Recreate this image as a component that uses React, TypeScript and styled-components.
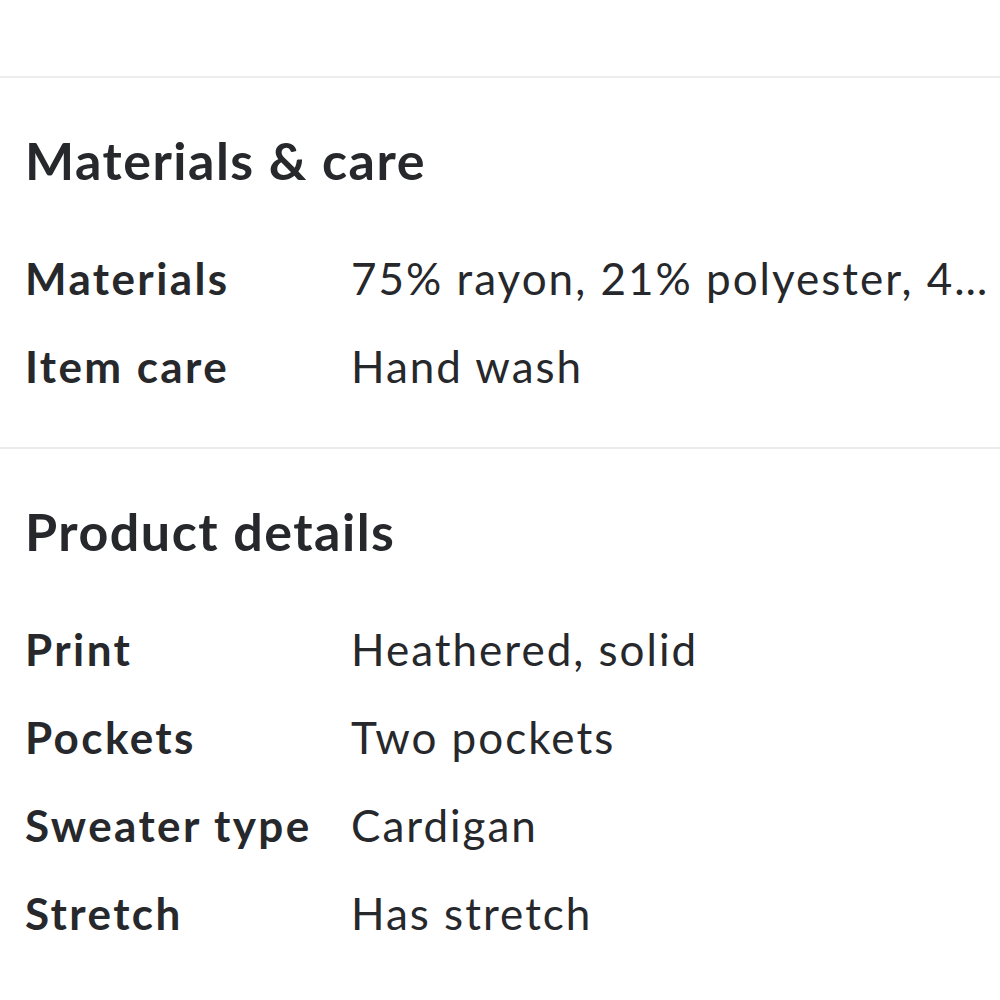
import React from "react";
import styled, { createGlobalStyle } from "styled-components";

const GlobalStyle = createGlobalStyle`
  html, body {
    margin: 0;
    padding: 0;
    background: #ffffff;
  }
  body {
    font-family: Lato, "Noto Sans", sans-serif;
    color: #26282c;
  }
`;

const Page = styled.div`
  padding-top: 76px;
  width: 1000px;
  overflow: hidden;
`;

const Section = styled.section`
  border-top: 2px solid #ececec;
  padding: 52px 10px 37px 25px;
`;

const Heading = styled.h2`
  margin: 0 0 44px;
  font-size: 52px;
  line-height: 60px;
  font-weight: 700;
  letter-spacing: 1.5px;
  color: #26282c;
`;

const Row = styled.div`
  display: grid;
  grid-template-columns: 326px 1fr;
  height: 88px;
  font-size: 44px;
  line-height: 88px;
`;

const Label = styled.div`
  font-weight: 700;
  letter-spacing: 2.4px;
  white-space: nowrap;
`;

const Value = styled.div`
  font-weight: 400;
  letter-spacing: 2px;
  white-space: nowrap;
  overflow: hidden;
  text-overflow: ellipsis;
`;

interface Detail {
  label: string;
  value: string;
}

const sections: { title: string; rows: Detail[] }[] = [
  {
    title: "Materials & care",
    rows: [
      { label: "Materials", value: "75% rayon, 21% polyester, 4% spandex" },
      { label: "Item care", value: "Hand wash" },
    ],
  },
  {
    title: "Product details",
    rows: [
      { label: "Print", value: "Heathered, solid" },
      { label: "Pockets", value: "Two pockets" },
      { label: "Sweater type", value: "Cardigan" },
      { label: "Stretch", value: "Has stretch" },
    ],
  },
];

const App: React.FC = () => {
  return (
    <>
      <GlobalStyle />
      <Page>
        {sections.map((s) => (
          <Section key={s.title}>
            <Heading>{s.title}</Heading>
            {s.rows.map((r) => (
              <Row key={r.label}>
                <Label>{r.label}</Label>
                <Value>{r.value}</Value>
              </Row>
            ))}
          </Section>
        ))}
      </Page>
    </>
  );
};

export default App;
